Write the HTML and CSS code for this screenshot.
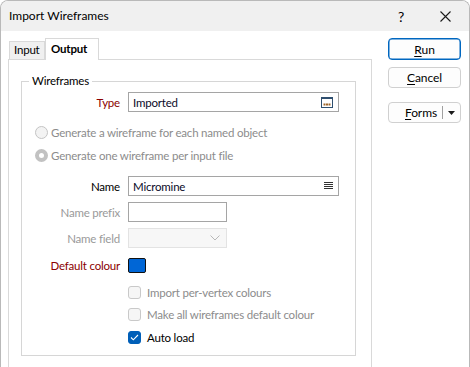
FILE: index.html
```html
<!DOCTYPE html>
<html>
<head>
<meta charset="utf-8">
<link rel="stylesheet" href="styles.css">
</head>
<body>
<div class="window">
  <div class="titlebar">
    <span class="title">Import Wireframes</span>
    <span class="tb-help">?</span>
    <svg class="tb-close" width="11" height="11" viewBox="0 0 11 11"><path d="M0.5 0.5 L10.5 10.5 M10.5 0.5 L0.5 10.5" stroke="#1a1a1a" stroke-width="1.1" fill="none"/></svg>
  </div>
  <div class="body">
    <div class="left">
      <div class="tabs">
        <div class="tab tab-input">Input</div>
        <div class="tab tab-output">Output</div>
      </div>
      <div class="pane">
        <div class="group">
          <div class="group-title">Wireframes</div>
          <div class="row row-type">
            <span class="lbl req">Type</span>
            <div class="field wide">
              <span class="val">Imported</span>
              <svg class="ico" width="12" height="11" viewBox="0 0 12 11">
                <rect x="0.5" y="0.5" width="11" height="10" fill="#fff" stroke="#2f4f6f"/>
                <rect x="0" y="0" width="12" height="2" fill="#2f4f6f"/>
                <rect x="2.5" y="6.5" width="2" height="2" fill="#a0672a"/>
                <rect x="5" y="6.5" width="2" height="2" fill="#a0672a"/>
                <rect x="7.5" y="6.5" width="2" height="2" fill="#a0672a"/>
              </svg>
            </div>
          </div>
          <div class="row row-r1">
            <span class="radio"></span>
            <span class="dis">Generate a wireframe for each named object</span>
          </div>
          <div class="row row-r2">
            <span class="radio on"></span>
            <span class="dis">Generate one wireframe per input file</span>
          </div>
          <div class="row row-name">
            <span class="lbl">Name</span>
            <div class="field wide">
              <span class="val">Micromine</span>
              <svg class="ico" width="9" height="8" viewBox="0 0 9 8">
                <path d="M0 0.5 H9 M0 2.5 H9 M0 4.5 H9 M0 6.5 H9" stroke="#333" stroke-width="1"/>
              </svg>
            </div>
          </div>
          <div class="row row-prefix">
            <span class="lbl dis">Name prefix</span>
            <div class="field short"></div>
          </div>
          <div class="row row-nfield">
            <span class="lbl dis">Name field</span>
            <div class="field short combo-dis">
              <svg class="chev" width="10" height="6" viewBox="0 0 10 6"><path d="M0.5 0.5 L5 5 L9.5 0.5" stroke="#b8b8b8" fill="none"/></svg>
            </div>
          </div>
          <div class="row row-colour">
            <span class="lbl req">Default colour</span>
            <span class="swatch"></span>
          </div>
          <div class="row row-c1">
            <span class="check"></span>
            <span class="dis">Import per-vertex colours</span>
          </div>
          <div class="row row-c2">
            <span class="check"></span>
            <span class="dis">Make all wireframes default colour</span>
          </div>
          <div class="row row-c3">
            <span class="check on">
              <svg width="9" height="7" viewBox="0 0 9 7"><path d="M1 3.5 L3.3 5.8 L8 1" stroke="#fff" stroke-width="1.1" fill="none"/></svg>
            </span>
            <span>Auto load</span>
          </div>
        </div>
      </div>
    </div>
    <div class="right">
      <button class="btn btn-run"><u>R</u>un</button>
      <button class="btn btn-cancel"><u>C</u>ancel</button>
      <button class="btn btn-forms"><span class="forms-txt"><u>F</u>orms</span><span class="sep"></span><svg width="7" height="4" viewBox="0 0 7 4"><path d="M0 0 H7 L3.5 4 Z" fill="#1a1a1a"/></svg></button>
    </div>
  </div>
</div>
</body>
</html>
```
FILE: styles.css
```css
* { box-sizing: border-box; }
html, body { margin: 0; padding: 0; background: #ffffff; }
body {
  font-family: Lato, "Noto Sans", sans-serif;
  font-size: 11.5px;
  letter-spacing: -0.2px;
  color: #000;
}
.window {
  width: 470px;
  height: 367px;
  border: 1px solid #b9b9b9;
  border-bottom: none;
  border-radius: 8px 8px 0 0;
  overflow: hidden;
  background: #ffffff;
}
.titlebar {
  height: 30px;
  background: #f0f0f0;
  display: flex;
  align-items: center;
  padding-left: 8px;
}
.title { flex: 1; font-size: 12px; letter-spacing: 0; line-height: 16px; }
.tb-help { font-size: 14px; margin-right: 36px; }
.tb-close { margin-right: 18px; }
.body { display: flex; }
.left {
  margin-left: 7px;
  width: 364px;
  padding-top: 7px;
}
.tabs {
  display: flex;
  align-items: flex-end;
  height: 21px;
  padding-left: 1px;
}
.tab {
  border: 1px solid #d9d9d9;
  border-bottom: none;
  line-height: 16px;
}
.tab-input {
  width: 36px;
  height: 18px;
  background: #f0f0f0;
  padding-left: 4px;
}
.tab-output {
  width: 54px;
  height: 22px;
  margin-bottom: -1px;
  background: #ffffff;
  font-weight: bold;
  padding-left: 5px;
  padding-top: 2px;
  position: relative;
  z-index: 1;
}
.pane {
  border: 1px solid #d9d9d9;
  border-bottom: none;
  height: 320px;
  padding: 21px 15px 0 12px;
  background: #ffffff;
}
.group {
  border: 1px solid #d6d6d6;
  height: 275px;
}
.group-title {
  width: max-content;
  height: 16px;
  margin: -9px 0 0 7px;
  padding: 0 3px;
  background: #ffffff;
  line-height: 16px;
}
.row {
  display: flex;
  align-items: center;
  height: 16px;
  white-space: nowrap;
}
.lbl {
  width: 98px;
  margin-right: 8px;
  text-align: right;
}
.req { color: #8b0000; }
.dis { color: #8c8c8c; }
.lbl.dis { color: #9a9a9a; }
.field {
  height: 20px;
  border: 1px solid #a5a5a5;
  background: #fff;
  display: flex;
  align-items: center;
  padding-left: 4px;
}
.field.wide { width: 211px; }
.field.short { width: 99px; }
.field .val { flex: 1; color: #0a0a28; }
.field .ico { margin-right: 5px; }
.combo-dis {
  border-color: #e3e3e3;
  background: #f7f7f7;
  justify-content: flex-end;
  padding-right: 6px;
}
.row-type { height: 20px; margin-top: 3px; }
.row-r1 { margin-top: 12px; padding-left: 13px; }
.row-r2 { margin-top: 7px; padding-left: 13px; }
.row-name { height: 20px; margin-top: 13px; }
.row-prefix { height: 20px; margin-top: 6px; }
.row-nfield { height: 20px; margin-top: 6px; }
.row-colour { margin-top: 9px; }
.row-c1 { margin-top: 11px; padding-left: 106px; }
.row-c2 { margin-top: 6px; padding-left: 106px; }
.row-c3 { margin-top: 7px; padding-left: 106px; }
.radio {
  width: 13px;
  height: 13px;
  border-radius: 50%;
  border: 1px solid #c4c4c4;
  background: #f3f3f3;
  margin-right: 3px;
}
.radio.on {
  border: 4px solid #c2c2c2;
  background: #ffffff;
}
.swatch {
  width: 18px;
  height: 15px;
  background: #0066d6;
  border: 1px solid #111;
  border-radius: 2px;
}
.check {
  width: 13px;
  height: 13px;
  border: 1px solid #c9c9c9;
  border-radius: 3px;
  background: #f6f6f6;
  margin-right: 6px;
  display: flex;
  align-items: center;
  justify-content: center;
}
.check.on {
  background: #005fb8;
  border-color: #005fb8;
}
.right {
  margin-left: 16px;
  width: 73px;
  padding-top: 7px;
  display: flex;
  flex-direction: column;
}
.btn {
  font-family: inherit;
  font-size: 12px;
  letter-spacing: -0.1px;
  color: #000;
  height: 22px;
  background: #fdfdfd;
  border: 1px solid #d0d0d0;
  border-radius: 4px;
  padding: 0;
  display: flex;
  align-items: center;
  justify-content: center;
}
.btn u { text-decoration-thickness: 1px; text-underline-offset: 2px; }
.btn-run { border-color: #0067c0; box-shadow: inset 0 0 0 0.5px #0067c0; }
.btn-cancel { margin-top: 7px; height: 21px; }
.btn-forms { margin-top: 14px; height: 21px; justify-content: flex-end; padding-right: 5px; }
.forms-txt { margin-right: 5px; }
.sep { width: 1px; height: 13px; background: #a0a0a0; margin-right: 5px; }
```
